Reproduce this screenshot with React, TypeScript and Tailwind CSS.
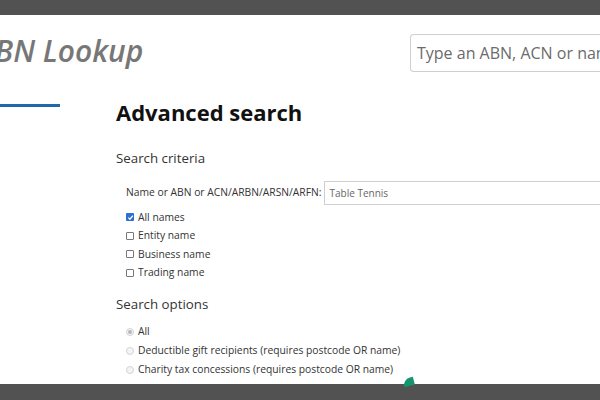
import React from "react";

export default function App() {
  return (
    <div
      className="relative w-[600px] h-[400px] overflow-hidden bg-white flex flex-col"
      style={{ fontFamily: '"Open Sans", "DejaVu Sans", sans-serif' }}
    >
      <div className="h-[15px] bg-[#525252] shrink-0" />
      <div className="flex-1 overflow-hidden flex flex-col">
        <div className="flex items-start h-[82px] shrink-0">
          <div className="ml-[-23px] mt-[16px] text-[30px] leading-[40px] font-semibold italic text-[#777] whitespace-nowrap">
            ABN Lookup
          </div>
          <div className="ml-auto mt-[19px] w-[190px] h-[38px] border border-[#cfcfcf] rounded-l-[4px] border-r-0 flex items-center pl-[6px] text-[16px] text-[#6b6b6b] whitespace-nowrap overflow-hidden">
            Type an ABN, ACN or name
          </div>
        </div>
        <div className="flex">
          <div className="w-[60px] shrink-0">
            <div className="mt-[7px] h-[3px] bg-[#1e6aa8]" />
          </div>
          <div className="ml-[56px] flex-1 min-w-0">
            <h1 className="text-[22px] leading-[30px] font-bold text-[#111]">Advanced search</h1>
            <h2 className="mt-[21px] text-[13.3px] leading-[20px] text-[#333]">Search criteria</h2>
            <div className="ml-[10px] mt-[13px] flex items-center text-[10.3px] text-[#333]">
              <span className="whitespace-nowrap">Name or ABN or ACN/ARBN/ARSN/ARFN:</span>
              <div className="ml-[3px] flex-1 h-[24px] border border-[#cfcfcf] border-r-0 flex items-center pl-[4px] text-[10px] text-[#666] whitespace-nowrap">
                Table Tennis
              </div>
            </div>
            <div className="ml-[10px] mt-[3px] flex flex-col text-[10.3px] text-[#333]">
              {[
                ["All names", true],
                ["Entity name", false],
                ["Business name", false],
                ["Trading name", false],
              ].map(([label, checked]) => (
                <div key={label as string} className="h-[18.6px] flex items-center gap-[4px]">
                  {checked ? (
                    <span className="w-[8px] h-[8px] rounded-[1px] bg-[#2d6fd2] flex items-center justify-center">
                      <svg width="7" height="7" viewBox="0 0 8 8">
                        <path d="M1.5 4.2 L3.3 6 L6.6 2" stroke="white" strokeWidth="1.4" fill="none" />
                      </svg>
                    </span>
                  ) : (
                    <span className="w-[8px] h-[8px] rounded-[1px] border border-[#777] bg-white" />
                  )}
                  <span>{label as string}</span>
                </div>
              ))}
            </div>
            <h2 className="mt-[12px] text-[13.3px] leading-[20px] text-[#333]">Search options</h2>
            <div className="ml-[10px] mt-[8px] flex flex-col text-[10.3px] text-[#333]">
              {[
                ["All", true],
                ["Deductible gift recipients (requires postcode OR name)", false],
                ["Charity tax concessions (requires postcode OR name)", false],
              ].map(([label, checked]) => (
                <div key={label as string} className="h-[19px] flex items-center gap-[4px] whitespace-nowrap">
                  <span className="w-[8px] h-[8px] rounded-full border border-[#d4d4d4] bg-[#f4f4f4] flex items-center justify-center">
                    {checked ? <span className="w-[4px] h-[4px] rounded-full bg-[#b8b8b8]" /> : null}
                  </span>
                  <span>{label as string}</span>
                </div>
              ))}
            </div>
          </div>
        </div>
      </div>
      <div className="h-[16px] bg-[#525252] shrink-0" />
      <div className="absolute left-[403px] top-[378px] w-[11px] h-[8px] rounded-tl-full rounded-tr-[60%] bg-[#14956f] rotate-[-15deg]" />
    </div>
  );
}
